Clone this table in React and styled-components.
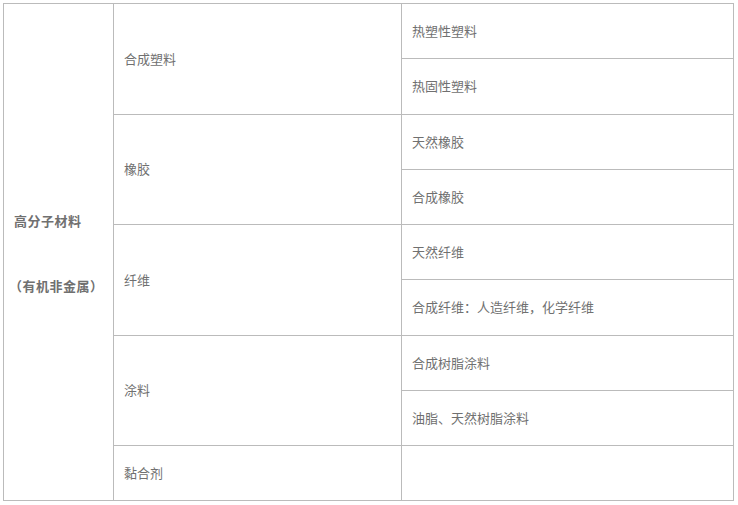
import React from 'react';
import styled, {createGlobalStyle} from 'styled-components';

const GlobalStyle = createGlobalStyle`
  body {
    margin: 0;
    background: #fff;
    font-family: "Noto Sans CJK SC", "Liberation Sans", sans-serif;
  }
`;

const rows = [
  {group: '合成塑料', items: ['热塑性塑料', '热固性塑料']},
  {group: '橡胶', items: ['天然橡胶', '合成橡胶']},
  {group: '纤维', items: ['天然纤维', '合成纤维：人造纤维，化学纤维']},
  {group: '涂料', items: ['合成树脂涂料', '油脂、天然树脂涂料']},
  {group: '黏合剂', items: ['']},
];

const totalRows = rows.reduce((n, r) => n + r.items.length, 0);

const App = () => {
  return (
    <Page>
      <GlobalStyle />
      <Table>
        <colgroup>
          <col style={{width: 110}} />
          <col style={{width: 288}} />
          <col />
        </colgroup>
        <tbody>
          {rows.map((r, i) =>
            r.items.map((item, j) => (
              <tr key={`${i}-${j}`}>
                {i === 0 && j === 0 && (
                  <HeadCell rowSpan={totalRows}>
                    <HeadText>
                      <span>高分子材料</span>
                      <span>（有机非金属）</span>
                    </HeadText>
                  </HeadCell>
                )}
                {j === 0 && <Cell rowSpan={r.items.length}>{r.group}</Cell>}
                <Cell>{item}</Cell>
              </tr>
            ))
          )}
        </tbody>
      </Table>
    </Page>
  );
};

const Page = styled.div`
  padding: 3px 0 0 3px;
`;

const Table = styled.table`
  width: 731px;
  border-collapse: collapse;
  table-layout: fixed;
  tr {
    height: 55.25px;
  }
`;

const Cell = styled.td`
  border: 1px solid #bbbbbb;
  padding: 0 0 0 10px;
  vertical-align: middle;
  color: #707070;
  font-size: 13px;
  line-height: 18px;
`;

const HeadCell = styled(Cell)`
  font-weight: bold;
  padding-top: 2px;
`;

const HeadText = styled.div`
  display: flex;
  flex-direction: column;
  gap: 47px;
  letter-spacing: 0.5px;
  span:last-child {
    margin-left: -5px;
  }
`;

export default App;
